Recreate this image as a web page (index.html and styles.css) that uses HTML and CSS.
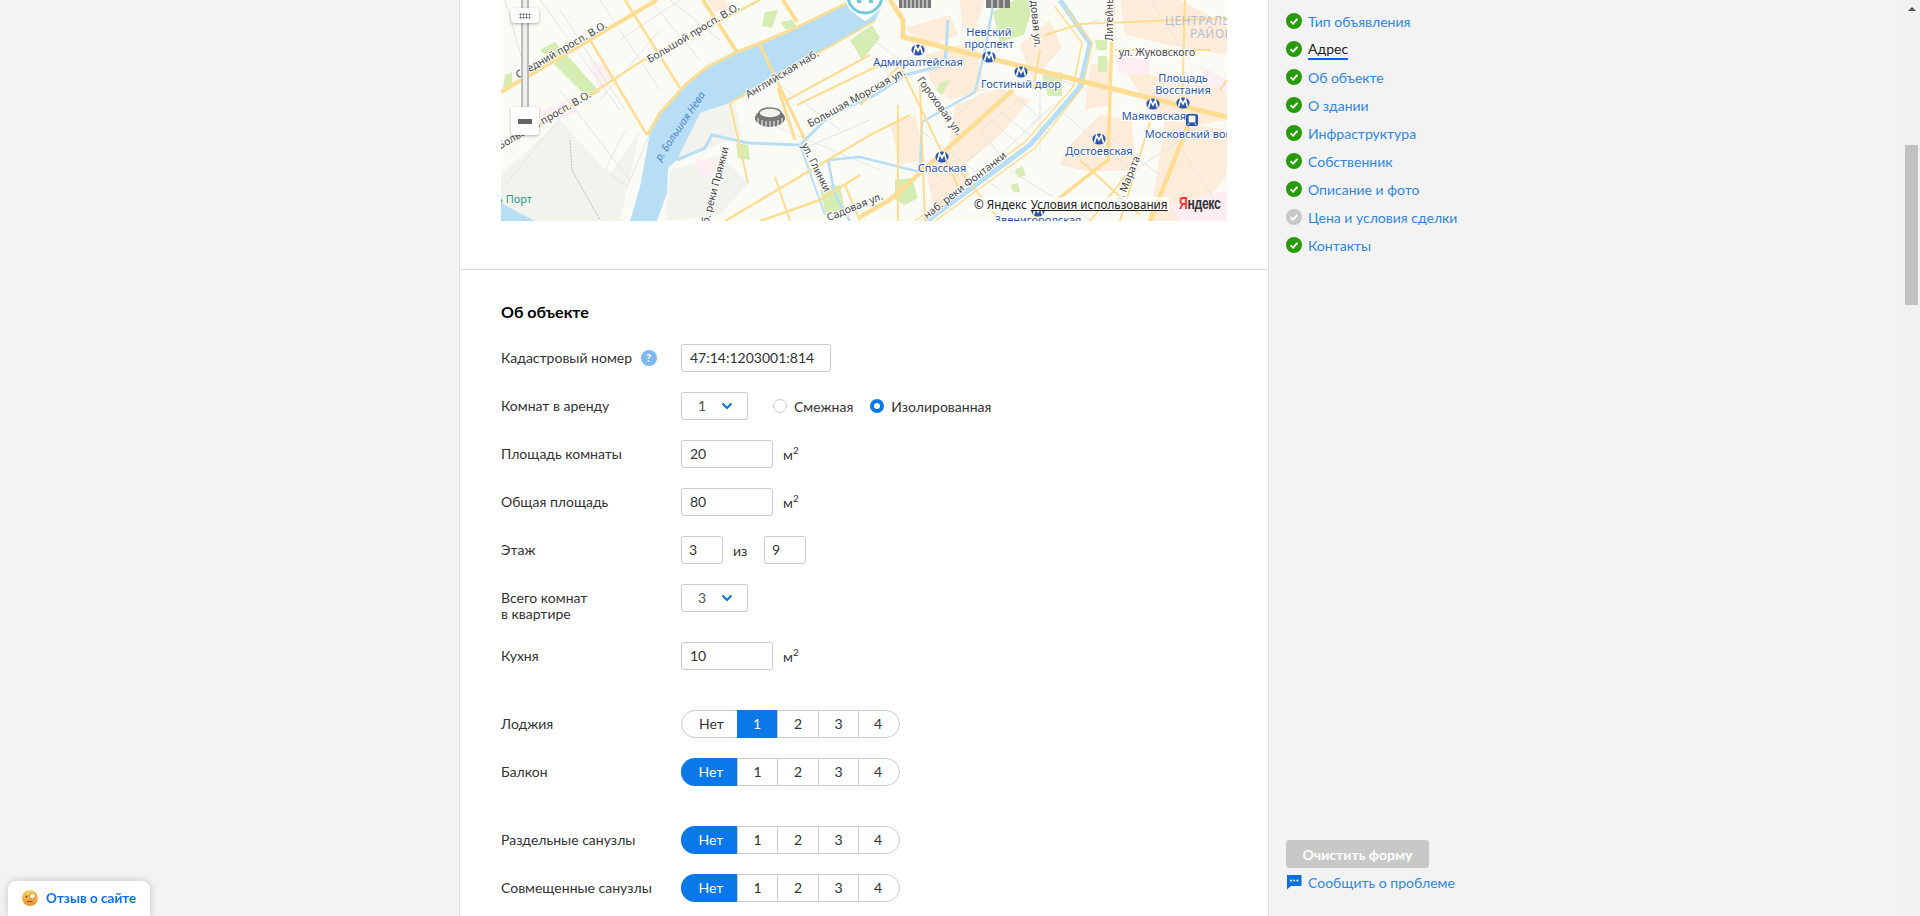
FILE: index.html
```html
<!DOCTYPE html>
<html lang="ru">
<head>
    <meta charset="utf-8">
    <title>Подача объявления</title>
    <link rel="stylesheet" href="styles.css">
</head>
<body>
    <svg class="defs" width="0" height="0">
        <symbol id="metro" viewBox="0 0 14 12">
            <ellipse cx="7" cy="6" rx="6.6" ry="5.6" fill="#2c55ad"/>
            <path d="M2.6 9.6 4.6 2.2 7 6.8 9.4 2.2 11.4 9.6" fill="none" stroke="#fff" stroke-width="1.7"/>
        </symbol>
        <symbol id="ok" viewBox="0 0 16 16">
            <circle cx="8" cy="8" r="8" fill="currentColor"/>
            <path d="M4.6 8.2 7.1 10.6 11.4 5.9" fill="none" stroke="#fff" stroke-width="2"/>
        </symbol>
    </svg>

    <div class="left"></div>

    <main>
        <section class="map-block">
            <div class="map">
                <svg class="map-svg" viewBox="501 0 726 221" width="726" height="221">
                    <rect x="501" y="0" width="726" height="221" fill="#fbfbf6"/>

                    <!-- кварталы -->
                    <g fill="#fdecda">
                        <path d="M905 28 950 15 958 35 925 48Z"/>
                        <path d="M960 0 985 0 975 30 962 28Z"/>
                        <path d="M1020 45 1050 20 1062 48 1032 80Z"/>
                        <path d="M925 55 975 40 985 90 950 100 930 82Z"/>
                        <path d="M890 125 915 115 925 160 900 165Z"/>
                        <path d="M955 105 1000 88 1030 100 1000 135 965 165 948 150Z"/>
                        <path d="M925 165 962 140 970 180 935 215Z"/>
                        <path d="M1090 65 1110 60 1108 105 1085 110Z"/>
                        <path d="M1065 150 1100 115 1132 120 1135 170 1090 172 1060 165Z"/>
                        <path d="M1125 70 1227 90 1227 120 1200 125 1150 110Z"/>
                        <path d="M1165 120 1227 130 1227 175 1190 221 1150 221Z"/>
                        <path d="M1120 0 1180 0 1227 25 1227 55 1170 45 1125 35Z"/>
                        <path d="M707 0 725 0 730 10 715 12Z"/>
                    </g>
                    <g fill="#f3f3ee">
                        <path d="M501 175 560 120 610 175 640 130 620 221 501 221Z"/>
                        <path d="M700 113 735 102 742 135 677 160Z"/>
                        <path d="M670 170 720 155 748 183 720 215 665 221Z"/>
                    </g>
                    <g fill="#fdeef3">
                        <path d="M590 60 605 65 612 82 598 88Z"/>
                        <path d="M540 112 570 97 578 112 548 124Z"/>
                        <path d="M695 158 712 162 710 178 700 176Z"/>
                        <path d="M1115 55 1150 60 1150 75 1118 72Z"/>
                        <path d="M1200 65 1227 80 1227 92 1205 85Z"/>
                        <path d="M1170 205 1227 190 1227 221 1180 221Z"/>
                    </g>
                    <g fill="#d5ecb3">
                        <path d="M540 50 555 42 600 92 588 98Z"/>
                        <path d="M505 75 512 72 512 88 503 88Z"/>
                        <path d="M765 12 778 10 772 28 762 26Z"/>
                        <path d="M780 22 792 20 797 26 786 30Z"/>
                        <path d="M850 40 872 25 880 38 862 60Z"/>
                        <path d="M736 143 748 145 750 160 738 158Z"/>
                        <path d="M820 190 840 185 845 210 825 212Z"/>
                        <path d="M993 12 1015 0 1035 0 1024 35 1000 42Z"/>
                        <path d="M1042 75 1062 72 1062 96 1048 96Z"/>
                        <path d="M1095 40 1107 40 1107 50 1097 50Z"/>
                        <path d="M1098 56 1107 56 1107 72 1098 72Z"/>
                        <path d="M941 82 950 80 942 95 936 90Z"/>
                        <path d="M895 180 912 178 918 198 905 205 895 200Z"/>
                        <path d="M1015 170 1022 166 1026 175 1018 178Z"/>
                        <path d="M1010 185 1018 183 1020 192 1014 192Z"/>
                    </g>

                    <!-- улицы -->
                    <g fill="none" stroke="#e6e6e0" stroke-width="1">
                        <path d="M505 0 525 70 M540 0 620 110 M560 90 630 180 M600 100 660 30 M650 0 700 60 M620 40 680 0 M625 130 605 170 627 187 650 133 M575 100 501 190"/>
                        <path d="M560 10 625 110 M600 0 660 90 M670 0 720 40 M760 70 840 130 M760 120 880 170 M800 150 870 120 M920 130 1000 190 M1010 170 1090 220 M1040 90 1040 150 M1170 130 1227 221 M1120 180 1180 140 M1060 110 1130 170 M950 120 1000 80 M1030 125 1060 100"/>
                        <path d="M860 30 900 60 M1060 30 1100 20 M1150 0 1190 60 M1000 60 1090 90 M1100 130 1180 190 M930 190 980 150"/>
                        <path d="M980 130 1020 100 1040 118 1000 155 980 130 M990 120 1020 145 M1000 112 1030 135"/>
                    </g>
                    <path d="M570 140 572 170 600 220" fill="none" stroke="#bbb" stroke-width="1" stroke-dasharray="2 1"/>

                    <!-- вода -->
                    <path d="M855 0 885 0 875 21 730 103 700 113 677 160 668 168 667 193 657 221 630 221 640 187 650 133 660 113 687 83 707 67 737 50 760 42 787 32Z" fill="#b8def5"/>
                    <path d="M501 203 535 221 501 221Z" fill="#b8def5"/>
                    <g fill="none" stroke="#b8def5">
                        <path d="M677 160 705 148 712 135 748 143 800 145 830 115 875 95 905 75 945 65 948 20" stroke-width="3"/>
                        <path d="M1060 0 1090 43 1080 87 1030 145 927 221" stroke-width="5"/>
                        <path d="M994 0 985 50 975 92 922 122 920 172 860 157 828 160 835 195 850 221" stroke-width="2.5"/>
                        <path d="M800 145 825 215" stroke-width="2"/>
                    </g>

                    <!-- проспекты -->
                    <g fill="none" stroke="#fedd92">
                        <path d="M501 92 657 0" stroke-width="4"/>
                        <path d="M503 147 587 97 640 62 760 0" stroke-width="2.5"/>
                        <path d="M647 135 660 113 687 83 707 67 737 52 760 43 787 32 847 3" stroke-width="3"/>
                        <path d="M625 0 680 88 M590 40 647 135" stroke-width="2.5"/>
                        <path d="M703 0 737 52 M783 0 797 22" stroke-width="4"/>
                        <path d="M760 45 805 140 M778 88 795 140" stroke-width="3"/>
                        <path d="M730 103 875 21 M730 103 748 183 M787 100 870 55 M797 105 890 60" stroke-width="2"/>
                        <path d="M725 221 870 135 910 115 M760 221 820 200 860 175" stroke-width="2.5"/>
                        <path d="M775 177 790 221 M845 185 860 221 M900 65 960 190 M898 105 898 221 M860 105 900 65 M920 85 925 221" stroke-width="2"/>
                        <path d="M890 0 903 20 903 37 1227 117" stroke-width="5"/>
                        <path d="M1013 90 890 200 860 217" stroke-width="4.5"/>
                        <path d="M1113 0 1108 160 1030 221" stroke-width="3.5"/>
                        <path d="M1193 113 1150 221" stroke-width="4.5"/>
                        <path d="M1040 50 1033 90 M1045 35 1080 24 1227 18 M1115 50 1210 50 M1185 0 1182 110 M1220 90 1227 80" stroke-width="2"/>
                        <path d="M1065 7 1092 43 1083 87 1035 148 935 221 M1055 7 1082 43 1073 87 1025 142 915 221" stroke-width="1.5"/>
                        <path d="M1080 160 1140 215 M1130 170 1090 221 M960 170 1000 221 M1150 122 1120 221" stroke-width="2"/>
                    </g>

                    <!-- здания -->
                    <g fill="#777">
                        <path d="M899 0H931V8H899Z"/>
                        <path d="M986 0H1010V8H986Z"/>
                    </g>
                    <g fill="none" stroke="#fff" stroke-width="1">
                        <path d="M903 0V8M907 0V8M911 0V8M915 0V8M919 0V8M923 0V8M927 0V8"/>
                        <path d="M992 0V8M998 0V8M1004 0V8"/>
                    </g>
                    <ellipse cx="770" cy="118" rx="15" ry="9" fill="#777"/>
                    <ellipse cx="770" cy="113" rx="11" ry="5" fill="#f3f3ee" stroke="#777" stroke-width="1.5"/>
                    <path d="M758 118V125M762 120V127M766 121V127M770 121V127M774 121V127M778 120V127M782 118V125" stroke="#fff" stroke-width="1"/>

                    <!-- метка -->
                    <path d="M855 14 865 21 875 14Z" fill="#fff"/>
                    <circle cx="865" cy="-4" r="20" fill="#fff"/>
                    <circle cx="865" cy="-4" r="17" fill="#fff" stroke="#6fcbdc" stroke-width="3"/>
                    <path d="M857 0H861V3H857ZM869 0H873V3H869Z" fill="#6fcbdc"/>

                    <!-- подписи -->
                    <g class="label-road">
                        <text transform="translate(563 53) rotate(-30)">Средний просп. В.О.</text>
                        <text transform="translate(695 36) rotate(-31)">Большой просп. В.О.</text>
                        <text transform="translate(546 123) rotate(-30)">Большой просп. В.О.</text>
                        <text transform="translate(784 77) rotate(-31)">Английская наб.</text>
                        <text transform="translate(858 101) rotate(-29)">Большая Морская ул.</text>
                        <text transform="translate(813 169) rotate(64)">ул. Глинки</text>
                        <text transform="translate(717 192) rotate(-75)">наб. реки Пряжки</text>
                        <text transform="translate(856 210) rotate(-22)">Садовая ул.</text>
                        <text transform="translate(937 108) rotate(54)">Гороховая ул.</text>
                        <text transform="translate(1032 18) rotate(85)">Садовая ул.</text>
                        <text transform="translate(1113 6) rotate(-90)">Литейный пр.</text>
                        <text x="1157" y="56">ул. Жуковского</text>
                        <text transform="translate(967 188) rotate(-38)">наб. реки Фонтанки</text>
                        <text transform="translate(1130 183) rotate(-68)">ул. Марата</text>
                    </g>
                    <text class="label-river" transform="translate(683 128) rotate(-56)">р. Большая Нева</text>
                    <text class="label-port" x="532" y="203">ь Порт</text>
                    <text class="label-area" x="1165" y="25">ЦЕНТРАЛЬНЫЙ</text>
                    <text class="label-area" x="1190" y="38">РАЙОН</text>
                    <g class="label-metro">
                        <text x="918" y="66">Адмиралтейская</text>
                        <text x="989" y="36">Невский</text>
                        <text x="989" y="48">проспект</text>
                        <text x="1021" y="88">Гостиный двор</text>
                        <text x="1183" y="82">Площадь</text>
                        <text x="1183" y="94">Восстания</text>
                        <text x="1154" y="120">Маяковская</text>
                        <text x="1197" y="138">Московский вокзал</text>
                        <text x="1099" y="155">Достоевская</text>
                        <text x="942" y="172">Спасская</text>
                        <text x="1038" y="224">Звенигородская</text>
                    </g>
                    <use href="#metro" x="911" y="44" width="14" height="12"/>
                    <use href="#metro" x="982" y="51" width="14" height="12"/>
                    <use href="#metro" x="1014" y="66" width="14" height="12"/>
                    <use href="#metro" x="1176" y="97" width="14" height="12"/>
                    <use href="#metro" x="1146" y="98" width="14" height="12"/>
                    <use href="#metro" x="1092" y="133" width="14" height="12"/>
                    <use href="#metro" x="935" y="151" width="14" height="12"/>
                    <use href="#metro" x="1031" y="205" width="14" height="12"/>
                    <rect x="1186" y="114" width="12" height="12" rx="2" fill="#2c55ad"/>
                    <path d="M1189 116H1195V122H1189ZM1189 123 1188 125M1195 123 1196 125" fill="#fff" stroke="#fff" stroke-width=".8"/>
                </svg>

                <div class="map-track"></div>
                <div class="map-handle"></div>
                <div class="map-minus"><span></span></div>
                <div class="map-copy">
                    <span>© Яндекс</span>
                    <a>Условия использования</a>
                </div>
                <div class="map-logo"><b>Я</b>ндекс</div>
            </div>
        </section>

        <section class="about">
            <h2>Об объекте</h2>

            <div class="row">
                <label>Кадастровый номер <i class="hint">?</i></label>
                <div class="field w-cad">47:14:1203001:814</div>
            </div>
            <div class="row">
                <label>Комнат в аренду</label>
                <div class="field select">1 <svg class="chev" viewBox="0 0 12 8"><path d="M1.5 1.5 6 6 10.5 1.5"/></svg></div>
                <div class="radios">
                    <span class="radio"></span><span>Смежная</span>
                    <span class="radio on"></span><span>Изолированная</span>
                </div>
            </div>
            <div class="row">
                <label>Площадь комнаты</label>
                <div class="field w-area">20</div>
                <span class="unit">м<sup>2</sup></span>
            </div>
            <div class="row">
                <label>Общая площадь</label>
                <div class="field w-area">80</div>
                <span class="unit">м<sup>2</sup></span>
            </div>
            <div class="row">
                <label>Этаж</label>
                <div class="field w-floor">3</div>
                <span class="of">из</span>
                <div class="field w-floor">9</div>
            </div>
            <div class="row row-tall">
                <label>Всего комнат<br>в квартире</label>
                <div class="field select">3 <svg class="chev" viewBox="0 0 12 8"><path d="M1.5 1.5 6 6 10.5 1.5"/></svg></div>
            </div>
            <div class="row group-end">
                <label>Кухня</label>
                <div class="field w-area">10</div>
                <span class="unit">м<sup>2</sup></span>
            </div>
            <div class="row">
                <label>Лоджия</label>
                <div class="seg"><span>Нет</span><span class="on">1</span><span>2</span><span>3</span><span>4</span></div>
            </div>
            <div class="row group-end">
                <label>Балкон</label>
                <div class="seg"><span class="on">Нет</span><span>1</span><span>2</span><span>3</span><span>4</span></div>
            </div>
            <div class="row">
                <label>Раздельные санузлы</label>
                <div class="seg"><span class="on">Нет</span><span>1</span><span>2</span><span>3</span><span>4</span></div>
            </div>
            <div class="row">
                <label>Совмещенные санузлы</label>
                <div class="seg"><span class="on">Нет</span><span>1</span><span>2</span><span>3</span><span>4</span></div>
            </div>
        </section>
    </main>

    <aside>
        <nav>
            <a><svg class="ok"><use href="#ok"/></svg>Тип объявления</a>
            <a class="current"><svg class="ok"><use href="#ok"/></svg><span>Адрес</span></a>
            <a><svg class="ok"><use href="#ok"/></svg>Об объекте</a>
            <a><svg class="ok"><use href="#ok"/></svg>О здании</a>
            <a><svg class="ok"><use href="#ok"/></svg>Инфраструктура</a>
            <a><svg class="ok"><use href="#ok"/></svg>Собственник</a>
            <a><svg class="ok"><use href="#ok"/></svg>Описание и фото</a>
            <a><svg class="ok off"><use href="#ok"/></svg>Цена и условия сделки</a>
            <a><svg class="ok"><use href="#ok"/></svg>Контакты</a>
        </nav>
        <div class="side-bottom">
            <button>Очистить форму</button>
            <a class="report">
                <svg viewBox="0 0 16 16" width="16" height="16"><path d="M1 1H15.5V12H5L1 15.5Z" fill="#0a6fe0"/><circle cx="5" cy="6.5" r="1" fill="#fff"/><circle cx="8.2" cy="6.5" r="1" fill="#fff"/><circle cx="11.4" cy="6.5" r="1" fill="#fff"/></svg>
                Сообщить о проблеме
            </a>
        </div>
    </aside>

    <div class="scrollbar">
        <div class="arrow"></div>
        <div class="thumb"></div>
    </div>

    <div class="feedback">
        <svg viewBox="0 0 16 16" width="16" height="16">
            <defs><linearGradient id="face" x1="0" y1="0" x2="0" y2="1"><stop offset="0" stop-color="#f9d667"/><stop offset="1" stop-color="#ec8f2a"/></linearGradient></defs>
            <circle cx="8" cy="8" r="8" fill="url(#face)"/>
            <circle cx="10.5" cy="6" r="3" fill="#fdf2c8" stroke="#a9803a" stroke-width=".8"/>
            <circle cx="4.5" cy="6.5" r="1" fill="#7a4a14"/>
            <path d="M5 11.5H10.5" stroke="#7a4a14" stroke-width="1"/>
        </svg>
        Отзыв о сайте
    </div>
</body>
</html>
```

FILE: styles.css
```css
* {
    box-sizing: border-box;
}

body {
    font-family: "Lato", "Noto Sans", sans-serif;
    font-size: 14px;
    color: #333;
    margin: 0;
    height: 916px;
    overflow: hidden;
    background-color: #f3f3f3;
    display: flex;
}

.defs {
    position: absolute;
}

.left {
    width: 459px;
}

main {
    width: 810px;
    height: 916px;
    overflow: hidden;
    background-color: #fff;
    border-left: 1px solid #e0e0e0;
    border-right: 1px solid #e0e0e0;
}

/* карта */
.map-block {
    padding: 0 41px 48px;
    border-bottom: 1px solid #e0e0e0;
}

.map {
    position: relative;
    width: 726px;
    height: 221px;
    overflow: hidden;
}

.map-svg {
    display: block;
}

.map-svg text {
    font-family: "Noto Sans", sans-serif;
    text-anchor: middle;
}

.label-road text {
    font-size: 10.5px;
    fill: #444;
    paint-order: stroke;
    stroke: #fff;
    stroke-width: 2px;
}

.label-metro text {
    font-size: 11px;
    fill: #2c55ad;
    paint-order: stroke;
    stroke: #fff;
    stroke-width: 2px;
}

.map-svg .label-river {
    font-size: 10.5px;
    font-style: italic;
    fill: #4a86d0;
}

.map-svg .label-port {
    font-size: 11px;
    fill: #2e9a85;
    text-anchor: end;
}

.map-svg .label-area {
    font-size: 12px;
    letter-spacing: .5px;
    fill: #b9bdd2;
    text-anchor: start;
}

.map-handle {
    position: absolute;
    left: 10px;
    top: 8px;
    width: 28px;
    height: 15px;
    background-color: #fff;
    border-radius: 3px;
    box-shadow: 0 1px 3px rgba(0, 0, 0, 0.3);
}

.map-handle::after {
    content: "";
    position: absolute;
    left: 8px;
    top: 5px;
    width: 12px;
    height: 6px;
    background-image: radial-gradient(#666 45%, transparent 50%);
    background-size: 3px 3px;
}

.map-track {
    position: absolute;
    left: 20px;
    top: 0;
    width: 8px;
    height: 107px;
    background-color: #eee;
    border-left: 2px solid #bbb;
    border-right: 2px solid #bbb;
}

.map-minus {
    position: absolute;
    left: 10px;
    top: 107px;
    width: 28px;
    height: 28px;
    background-color: #fff;
    border-radius: 3px;
    box-shadow: 0 1px 3px rgba(0, 0, 0, 0.3);
    display: flex;
    align-items: center;
    justify-content: center;
}

.map-minus span {
    width: 14px;
    height: 5px;
    background-color: #666;
}

.map-copy {
    position: absolute;
    left: 471px;
    top: 197px;
    height: 14px;
    padding: 0 1px 0 2px;
    background-color: rgba(255, 255, 255, 0.8);
    font-family: "Noto Sans", sans-serif;
    font-size: 11.7px;
    line-height: 14px;
    color: #222;
    white-space: nowrap;
    display: flex;
    gap: 4px;
}

.map-copy a {
    text-decoration: underline;
}

.map-logo {
    position: absolute;
    left: 678px;
    top: 194px;
    font-family: "Liberation Sans", sans-serif;
    font-size: 17px;
    font-weight: bold;
    line-height: 20px;
    letter-spacing: -.5px;
    color: #333;
    transform: scaleX(.72);
    transform-origin: left;
}

.map-logo b {
    color: #f33;
}

/* форма */
.about {
    padding: 32px 41px 0;
}

h2 {
    font-size: 16px;
    font-weight: bold;
    line-height: 20px;
    color: #000;
    margin: 0 0 22px;
}

.row {
    display: flex;
    align-items: center;
    height: 28px;
    margin-bottom: 20px;
}

.row-tall {
    height: 38px;
    align-items: flex-start;
}

.group-end {
    margin-bottom: 40px;
}

.row label {
    width: 180px;
    flex: none;
    line-height: 16px;
}

.row-tall label {
    padding-top: 6px;
}

.hint {
    display: inline-block;
    width: 16px;
    height: 16px;
    margin-left: 5px;
    border-radius: 50%;
    background-color: #7db8f2;
    color: #fff;
    font-size: 11px;
    font-weight: bold;
    font-style: normal;
    line-height: 16px;
    text-align: center;
    vertical-align: top;
}

.field {
    height: 28px;
    border: 1px solid #ccc;
    border-radius: 3px;
    padding: 0 8px;
    line-height: 26px;
    background-color: #fff;
    font-size: 14px;
}

.w-cad {
    width: 150px;
}

.w-area {
    width: 92px;
}

.w-floor {
    width: 42px;
    padding: 0 7px;
}

.select {
    width: 67px;
    padding: 0 0 0 16px;
    color: #555;
    position: relative;
}

.chev {
    position: absolute;
    left: 39px;
    top: 9px;
    width: 12px;
    height: 8px;
    fill: none;
    stroke: #0a6fe0;
    stroke-width: 2;
}

.radios {
    display: flex;
    align-items: center;
    margin-left: 25px;
}

.radio {
    width: 14px;
    height: 14px;
    border: 1px solid #ccc;
    border-radius: 50%;
    margin-right: 7px;
}

.radios span:nth-child(2) {
    margin-right: 17px;
}

.radio.on {
    border: 4px solid #0a78e8;
}

.unit {
    margin-left: 10px;
}

.unit sup {
    font-size: 10px;
    line-height: 0;
}

.of {
    width: 41px;
    padding-left: 10px;
}

.seg {
    display: flex;
    width: 219px;
    height: 28px;
    border: 1px solid #ccc;
    border-radius: 14px;
    font-size: 14px;
    line-height: 26px;
    text-align: center;
}

.seg span {
    width: 40px;
    border-left: 1px solid #ccc;
}

.seg span:first-child {
    width: 55px;
    border-left: 0;
    padding-left: 4px;
    border-radius: 14px 0 0 14px;
}

.seg span:nth-child(3) {
    width: 41px;
}

.seg span:last-child {
    padding-right: 2px;
    flex: 1;
}

.seg .on {
    background-color: #0a78e8;
    color: #fff;
    margin: -1px 0;
    height: 28px;
    line-height: 28px;
    border-left: 0;
}

.seg .on:first-child {
    margin-left: -1px;
    width: 56px;
}

/* правая колонка */
aside {
    width: 634px;
    height: 916px;
    padding: 7px 0 26px 17px;
    display: flex;
    flex-direction: column;
}

nav a {
    display: flex;
    align-items: center;
    height: 28px;
    color: #2f86e0;
    white-space: nowrap;
}

.ok {
    width: 16px;
    height: 16px;
    margin-right: 6px;
    color: #279c08;
}

.ok.off {
    color: #c8c8c8;
}

nav .current span {
    color: #222;
    border-bottom: 2px solid #0a64f0;
    line-height: 18px;
    margin-top: 2px;
}

.side-bottom {
    margin-top: auto;
}

button {
    display: block;
    width: 143px;
    height: 28px;
    border: 0;
    border-radius: 3px;
    background-color: #c8c8c8;
    color: #fff;
    font-family: inherit;
    font-size: 14px;
    font-weight: bold;
    margin-bottom: 6px;
}

.report {
    display: flex;
    align-items: center;
    gap: 6px;
    color: #2f86e0;
    height: 16px;
}

/* полоса прокрутки */
.scrollbar {
    width: 17px;
    height: 916px;
    flex: none;
    background-color: #f1f1f1;
    padding: 7px 2px 0;
}

.arrow {
    width: 0;
    height: 0;
    margin: 0 auto;
    border: 4px solid transparent;
    border-top: 0;
    border-bottom: 4px solid #505050;
}

.thumb {
    height: 160px;
    margin-top: 134px;
    background-color: #c1c1c1;
}

.feedback {
    position: fixed;
    left: 8px;
    bottom: 0;
    width: 142px;
    height: 35px;
    padding: 9px 0 0 14px;
    background-color: #fff;
    border-radius: 8px 8px 0 0;
    box-shadow: 0 0 8px rgba(0, 0, 0, 0.2);
    color: #0a6cf0;
    font-weight: bold;
    font-size: 13.5px;
    line-height: 16px;
    display: flex;
    align-items: flex-start;
    gap: 8px;
}
```
